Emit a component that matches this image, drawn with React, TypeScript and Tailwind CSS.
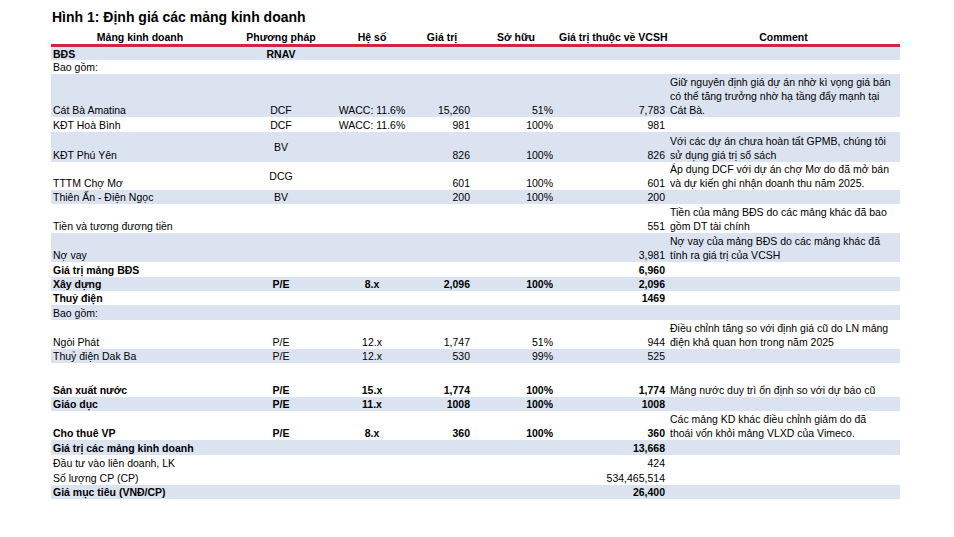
import React from "react";

type Row = {
  h: number;
  blue?: boolean;
  bold?: boolean;
  low?: boolean;
  name?: string;
  method?: string;
  methodMid?: boolean;
  coef?: string;
  value?: string;
  own?: string;
  vcsh?: string;
  comment?: string[];
};

const rows: Row[] = [
  { h: 14, blue: true, bold: true, low: true, name: "BĐS", method: "RNAV" },
  { h: 14, name: "Bao gồm:" },
  {
    h: 43,
    blue: true,
    name: "Cát Bà Amatina",
    method: "DCF",
    coef: "WACC: 11.6%",
    value: "15,260",
    own: "51%",
    vcsh: "7,783",
    comment: [
      "Giữ nguyên định giá dự án nhờ kì vọng giá bán",
      "có thể tăng trưởng nhờ hạ tầng đẩy mạnh tại",
      "Cát Bà.",
    ],
  },
  { h: 15, name: "KĐT Hoà Bình", method: "DCF", coef: "WACC: 11.6%", value: "981", own: "100%", vcsh: "981" },
  {
    h: 30,
    blue: true,
    name: "KĐT Phú Yên",
    method: "BV",
    methodMid: true,
    value: "826",
    own: "100%",
    vcsh: "826",
    comment: ["Với các dự án chưa hoàn tất GPMB, chúng tôi", "sử dụng giá trị sổ sách"],
  },
  {
    h: 28,
    name: "TTTM Chợ Mơ",
    method: "DCG",
    methodMid: true,
    value: "601",
    own: "100%",
    vcsh: "601",
    comment: ["Áp dụng DCF với dự án chợ Mơ do đã mở bán", "và dự kiến ghi nhận doanh thu năm 2025."],
  },
  { h: 14, blue: true, name: "Thiên Ấn - Điện Ngọc", method: "BV", value: "200", own: "100%", vcsh: "200" },
  {
    h: 29,
    name: "Tiền và tương đương tiền",
    vcsh: "551",
    comment: ["Tiền của mảng BĐS do các mảng khác đã bao", "gồm DT tài chính"],
  },
  {
    h: 29,
    blue: true,
    name: "Nợ vay",
    vcsh: "3,981",
    comment: ["Nợ vay của mảng BĐS do các mảng khác đã", "tính ra giá trị của VCSH"],
  },
  { h: 15, bold: true, name: "Giá trị mảng BĐS", vcsh: "6,960" },
  { h: 14, blue: true, bold: true, name: "Xây dựng", method: "P/E", coef: "8.x", value: "2,096", own: "100%", vcsh: "2,096" },
  { h: 14, bold: true, name: "Thuỷ điện", vcsh: "1469" },
  { h: 15, blue: true, name: "Bao gồm:" },
  {
    h: 29,
    name: "Ngòi Phát",
    method: "P/E",
    coef: "12.x",
    value: "1,747",
    own: "51%",
    vcsh: "944",
    comment: ["Điều chỉnh tăng so với định giá cũ do LN mảng", "điện khả quan hơn trong năm 2025"],
  },
  { h: 14, blue: true, name: "Thuỷ điện Dak Ba", method: "P/E", coef: "12.x", value: "530", own: "99%", vcsh: "525" },
  { h: 17 },
  {
    h: 17,
    bold: true,
    name: "Sản xuất nước",
    method: "P/E",
    coef: "15.x",
    value: "1,774",
    own: "100%",
    vcsh: "1,774",
    comment: ["Mảng nước duy trì ổn định so với dự báo cũ"],
  },
  { h: 14, blue: true, bold: true, name: "Giáo dục", method: "P/E", coef: "11.x", value: "1008", own: "100%", vcsh: "1008" },
  {
    h: 29,
    bold: true,
    name: "Cho thuê VP",
    method: "P/E",
    coef: "8.x",
    value: "360",
    own: "100%",
    vcsh: "360",
    comment: ["Các mảng KD khác điều chỉnh giảm do đã", "thoái vốn khỏi mảng VLXD của Vimeco."],
  },
  { h: 15, blue: true, bold: true, name: "Giá trị các mảng kinh doanh", vcsh: "13,668" },
  { h: 15, name: "Đầu tư vào liên doanh, LK", vcsh: "424" },
  { h: 15, name: "Số lượng CP (CP)", vcsh: "534,465,514" },
  { h: 14, blue: true, bold: true, name: "Giá mục tiêu (VNĐ/CP)", vcsh: "26,400" },
];

export default function App() {
  return (
    <div
      className="w-[954px] h-[537px] bg-white text-black overflow-hidden"
      style={{ fontFamily: '"Liberation Sans", Arial, sans-serif' }}
    >
      <div className="pl-[52px] pt-[9px] text-[14px] font-bold leading-[17px]">Hình 1: Định giá các mảng kinh doanh</div>
      <table className="ml-[51px] mt-[5px] table-fixed border-collapse text-[10.5px] leading-[12px]" style={{ width: 849 }}>
        <colgroup>
          <col className="w-[178px]" />
          <col className="w-[104px]" />
          <col className="w-[78px]" />
          <col className="w-[62px]" />
          <col className="w-[86px]" />
          <col className="w-[108px]" />
          <col className="w-[233px]" />
        </colgroup>
        <thead>
          <tr className="h-[13px] border-b-[3px] border-[#d0263f] font-bold">
            <th className="p-0 pb-[1px] align-bottom text-center font-bold">Mảng kinh doanh</th>
            <th className="p-0 pb-[1px] align-bottom text-center font-bold">Phương pháp</th>
            <th className="p-0 pb-[1px] align-bottom text-center font-bold">Hệ số</th>
            <th className="p-0 pb-[1px] align-bottom text-center font-bold">Giá trị</th>
            <th className="p-0 pb-[1px] align-bottom text-center font-bold">Sở hữu</th>
            <th className="p-0 pb-[1px] align-bottom text-center font-bold whitespace-nowrap">Giá trị thuộc về VCSH</th>
            <th className="p-0 pb-[1px] align-bottom text-center font-bold">Comment</th>
          </tr>
        </thead>
        <tbody>
          {rows.map((r, i) => {
            const pb = r.low ? "pb-0" : "pb-[1px]";
            return (
              <tr
                key={i}
                className={(r.blue ? "bg-[#dbe3f1] " : "bg-white ") + (r.bold ? "font-bold" : "font-normal")}
                style={{ height: r.h }}
              >
                <td className={"p-0 pl-[2px] align-bottom whitespace-nowrap " + pb}>{r.name}</td>
                <td className={"p-0 text-center whitespace-nowrap " + (r.methodMid ? "align-middle" : "align-bottom " + pb)}>
                  {r.method}
                </td>
                <td className={"p-0 text-center align-bottom whitespace-nowrap " + pb}>{r.coef}</td>
                <td className={"p-0 pr-[3px] text-right align-bottom whitespace-nowrap " + pb}>{r.value}</td>
                <td className={"p-0 pr-[6px] text-right align-bottom whitespace-nowrap " + pb}>{r.own}</td>
                <td className={"p-0 pr-[2px] text-right align-bottom whitespace-nowrap " + pb}>{r.vcsh}</td>
                <td className="p-0 pl-[3px] align-bottom whitespace-nowrap font-normal leading-[14px]">
                  {r.comment?.map((c, j) => (
                    <div key={j}>{c}</div>
                  ))}
                </td>
              </tr>
            );
          })}
        </tbody>
      </table>
    </div>
  );
}
